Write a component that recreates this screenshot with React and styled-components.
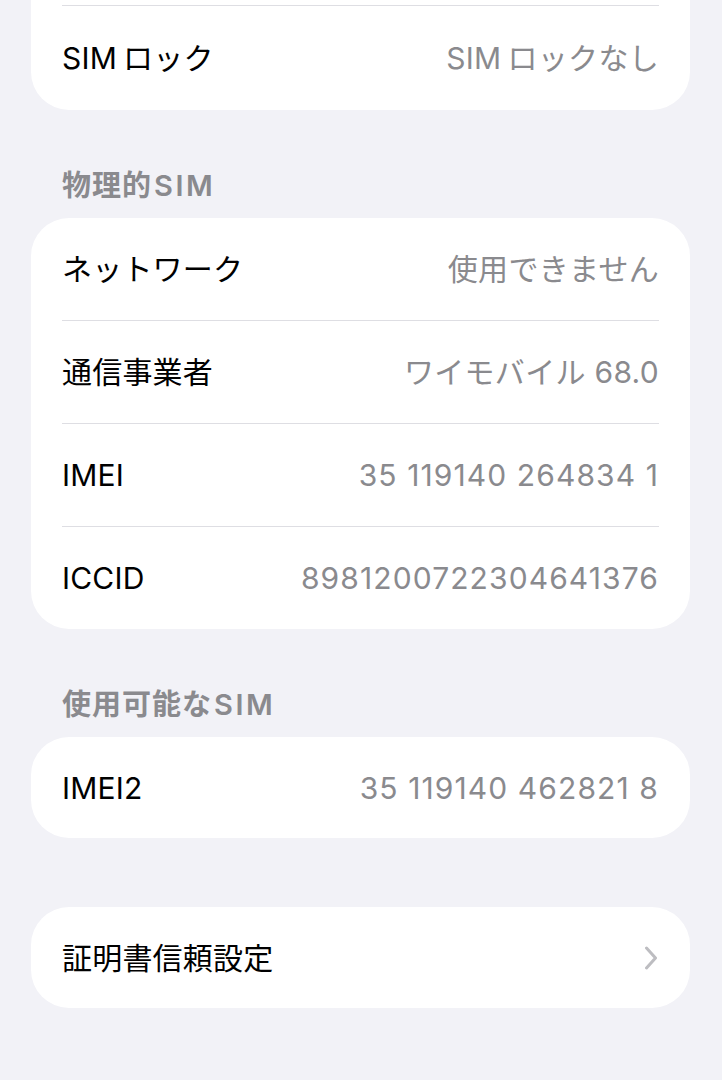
import React from "react";
import styled, { createGlobalStyle } from "styled-components";

const GlobalStyle = createGlobalStyle`
  html, body {
    margin: 0;
    padding: 0;
    background: #f2f2f7;
  }
  body {
    font-family: Inter, "Noto Sans CJK JP", "Noto Sans", sans-serif;
    -webkit-font-smoothing: antialiased;
  }
`;

const Page = styled.div`
  min-height: 1080px;
  padding: 0 32px 0 31px;
  box-sizing: border-box;
  background: #f2f2f7;
`;

const Card = styled.div`
  background: #ffffff;
  border-radius: ${(p) => (p.$cutTop ? "0 0 38px 38px" : "38px")};
  padding-top: ${(p) => (p.$cutTop ? "5px" : "0")};
  margin-top: ${(p) => p.$gap || 0}px;
  overflow: hidden;
`;

const Row = styled.div`
  margin: 0 31px;
  height: ${(p) => p.$h || 102}px;
  display: flex;
  align-items: center;
  justify-content: space-between;
  border-top: ${(p) => (p.$line ? "1px solid #dedee3" : "none")};
  & + & {
    border-top: 1px solid #dedee3;
  }
`;

const Label = styled.span`
  font-size: 30px;
  line-height: 36px;
  color: #000000;
  letter-spacing: 0.2px;
`;

const Value = styled.span`
  font-size: 30px;
  line-height: 36px;
  color: #8a8a8e;
  letter-spacing: ${(p) => (p.$num ? 1.1 : 0.3)}px;
`;

const Latin = styled.span`
  letter-spacing: ${(p) => p.$track || 0.5}px;
  margin: 0 ${(p) => p.$gap || 1}px;
`;

const Header = styled.div`
  padding: 61px 31px 17px;
  font-size: 29px;
  font-weight: 600;
  line-height: 30px;
  color: #8a8a8e;
  letter-spacing: 1px;
`;

const Chevron = () => (
  <svg width="14" height="24" viewBox="0 0 14 24" style={{ marginRight: "1px" }}>
    <path
      d="M2.5 2 L11.5 12 L2.5 22"
      fill="none"
      stroke="#bdbdc1"
      strokeWidth="3"
      strokeLinecap="round"
      strokeLinejoin="round"
    />
  </svg>
);

export default function App() {
  return (
    <>
      <GlobalStyle />
      <Page>
        <Card $cutTop>
          <Row $line $h={104}>
            <Label>
              SIM<Latin $gap={3} $track={0}></Latin>ロック
            </Label>
            <Value>
              SIM<Latin $gap={3} $track={0}></Latin>ロックなし
            </Value>
          </Row>
        </Card>

        <Header>
          物理的<Latin $gap={2} $track={2.5}>SIM</Latin>
        </Header>
        <Card>
          <Row>
            <Label>ネットワーク</Label>
            <Value>使用できません</Value>
          </Row>
          <Row>
            <Label>通信事業者</Label>
            <Value>ワイモバイル 68.0</Value>
          </Row>
          <Row>
            <Label>IMEI</Label>
            <Value $num>35 119140 264834 1</Value>
          </Row>
          <Row>
            <Label>ICCID</Label>
            <Value $num>8981200722304641376</Value>
          </Row>
        </Card>

        <Header>
          使用可能な<Latin $gap={2} $track={2.5}>SIM</Latin>
        </Header>
        <Card>
          <Row $h={101}>
            <Label>IMEI2</Label>
            <Value $num>35 119140 462821 8</Value>
          </Row>
        </Card>

        <Card $gap={69}>
          <Row $h={101}>
            <Label>証明書信頼設定</Label>
            <Chevron />
          </Row>
        </Card>
      </Page>
    </>
  );
}
